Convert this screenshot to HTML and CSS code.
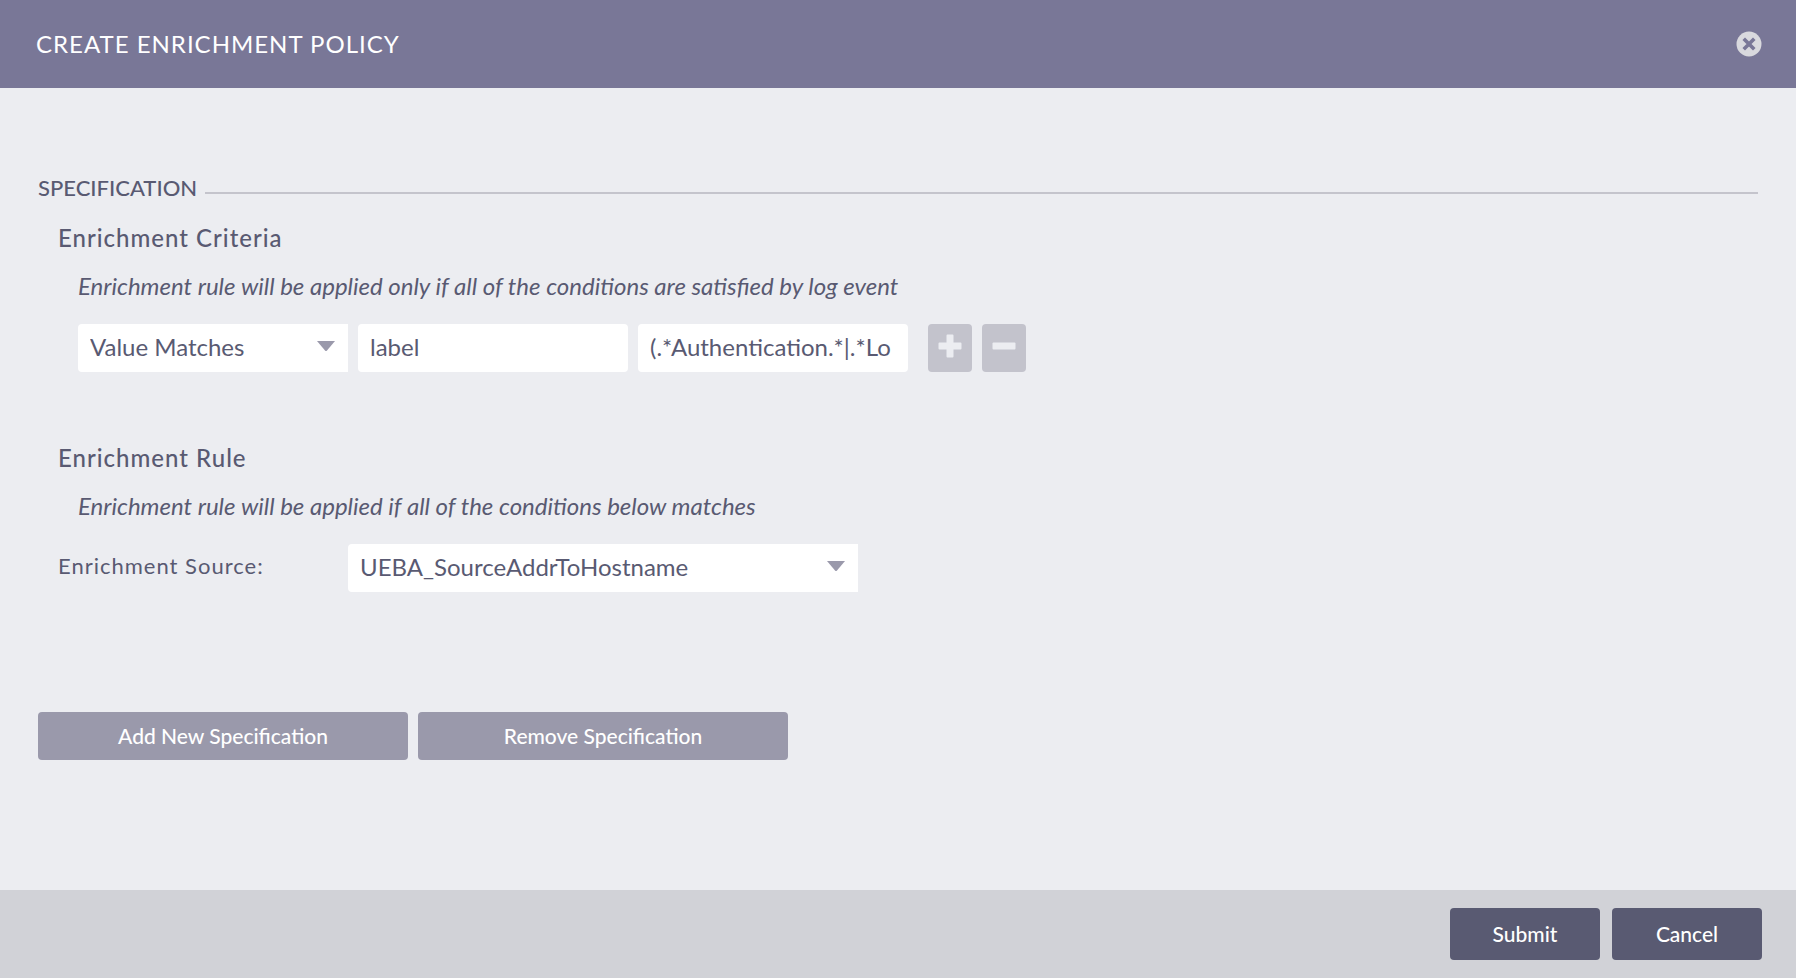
FILE: index.html
```html
<!DOCTYPE html>
<html lang="en">

<head>
    <meta charset="UTF-8">
    <meta name="viewport" content="width=device-width, initial-scale=1.0">
    <title>Create Enrichment Policy</title>
    <link rel="stylesheet" href="styles.css">
</head>

<body>
    <header class="header">
        <h1>CREATE ENRICHMENT POLICY</h1>
        <button type="button" class="close" aria-label="Close">
            <svg viewBox="0 0 26 26" width="26" height="26">
                <circle cx="13" cy="13" r="12.5" fill="#d9d9de" />
                <path d="M9 9l8 8M17 9l-8 8" stroke="#797797" stroke-width="3.6" stroke-linecap="square" />
            </svg>
        </button>
    </header>

    <form class="form" id="policyForm">
        <div class="section-title">
            <h2>SPECIFICATION</h2>
        </div>

        <section class="group">
            <h3>Enrichment Criteria</h3>
            <p class="hint">Enrichment rule will be applied only if all of the conditions are satisfied by log event</p>
            <div class="criteria">
                <div class="select">
                    <select aria-label="Criteria type">
                        <option>Value Matches</option>
                    </select>
                    <svg class="arrow" viewBox="0 0 20 12" width="20" height="12">
                        <path d="M1 1h18l-8 9.5q-1 1-2 0z" fill="#9a99ab" />
                    </svg>
                </div>
                <input type="text" class="field" value="label" aria-label="Key">
                <input type="text" class="field" value="(.*Authentication.*|.*Lo" aria-label="Value">
                <div class="row-buttons">
                    <button type="button" class="icon-button" aria-label="Add condition">
                        <svg viewBox="0 0 24 24" width="24" height="24">
                            <path d="M9.5 0.5h5q1 0 1 1v7h7q1 0 1 1v5q0 1-1 1h-7v7q0 1-1 1h-5q-1 0-1-1v-7h-7q-1 0-1-1v-5q0-1 1-1h7v-7q0-1 1-1z" fill="#ecedf1" />
                        </svg>
                    </button>
                    <button type="button" class="icon-button" aria-label="Remove condition">
                        <svg viewBox="0 0 24 24" width="24" height="24">
                            <rect x="0.5" y="8.5" width="23" height="7" rx="1" fill="#ecedf1" />
                        </svg>
                    </button>
                </div>
            </div>
        </section>

        <section class="group">
            <h3>Enrichment Rule</h3>
            <p class="hint">Enrichment rule will be applied if all of the conditions below matches</p>
            <div class="source">
                <label for="source">Enrichment Source:</label>
                <div class="select select-wide">
                    <select id="source">
                        <option>UEBA_SourceAddrToHostname</option>
                    </select>
                    <svg class="arrow" viewBox="0 0 20 12" width="20" height="12">
                        <path d="M1 1h18l-8 9.5q-1 1-2 0z" fill="#9a99ab" />
                    </svg>
                </div>
            </div>
        </section>

        <div class="spec-buttons">
            <button type="button" class="button">Add New Specification</button>
            <button type="button" class="button">Remove Specification</button>
        </div>
    </form>

    <footer class="footer">
        <button type="submit" form="policyForm" class="button button-dark">Submit</button>
        <button type="button" class="button button-dark">Cancel</button>
    </footer>
</body>

</html>
```

FILE: styles.css
```css
* {
    box-sizing: border-box;
}

body {
    margin: 0;
    min-height: 100vh;
    display: flex;
    flex-direction: column;
    background-color: #ecedf1;
    color: #595a72;
    font-family: Avenir, Lato, sans-serif;
    font-size: 24px;
    line-height: 32px;
}

h1, h2, h3, p {
    margin: 0;
    font-size: 24px;
}

button, input, select {
    font-family: inherit;
    color: inherit;
    border: none;
}

button {
    padding: 0;
    cursor: pointer;
}

svg {
    display: block;
}

.header {
    display: flex;
    align-items: center;
    justify-content: space-between;
    height: 88px;
    padding: 0 34px 0 36px;
    background-color: #797797;
    color: #fff;
}

h1 {
    font-weight: 400;
    letter-spacing: 1px;
}

.close {
    background: none;
}

.form {
    flex: 1;
    padding: 84px 38px 40px;
}

.section-title {
    display: flex;
    align-items: center;
    gap: 8px;
}

.section-title::after {
    content: "";
    flex: 1;
    height: 2px;
    margin-top: 10px;
    background-color: #c4c4cc;
}

h2 {
    font-size: 22px;
    font-weight: 500;
}

.group {
    padding: 18px 0 0 20px;
    margin-bottom: 52px;
}

h3 {
    font-weight: 500;
    letter-spacing: 1px;
}

.hint {
    margin: 16px 0 22px 20px;
    font-style: italic;
}

.criteria {
    display: flex;
    gap: 10px;
    margin-left: 20px;
}

.select {
    position: relative;
    width: 270px;
}

.select-wide {
    width: 510px;
}

.select select,
.field {
    height: 48px;
    padding: 0 12px 4px;
    background-color: #fff;
    border-radius: 4px;
    font-size: 24px;
}

.select select {
    width: 100%;
    appearance: none;
    border-radius: 4px 0 0 4px;
}

.field {
    width: 270px;
}

.arrow {
    position: absolute;
    top: 16px;
    right: 12px;
    pointer-events: none;
}

.row-buttons {
    display: flex;
    gap: 10px;
    margin-left: 10px;
}

.icon-button {
    display: flex;
    justify-content: center;
    width: 44px;
    height: 48px;
    padding-top: 10px;
    background-color: #c3c3cc;
    border-radius: 4px;
}

.source {
    display: flex;
    align-items: center;
}

.source label {
    width: 290px;
    padding-bottom: 4px;
    font-size: 22px;
    letter-spacing: 1px;
}

.spec-buttons {
    display: flex;
    gap: 10px;
    margin-top: 120px;
}

.button {
    width: 370px;
    height: 48px;
    padding-bottom: 2px;
    background-color: #9a99ab;
    color: #fff;
    border-radius: 4px;
    font-size: 21px;
    font-weight: 500;
}

.footer {
    display: flex;
    align-items: center;
    justify-content: flex-end;
    gap: 12px;
    height: 88px;
    padding: 0 34px;
    background-color: #d1d2d7;
}

.button-dark {
    width: 150px;
    height: 52px;
    background-color: #595a72;
}
```
